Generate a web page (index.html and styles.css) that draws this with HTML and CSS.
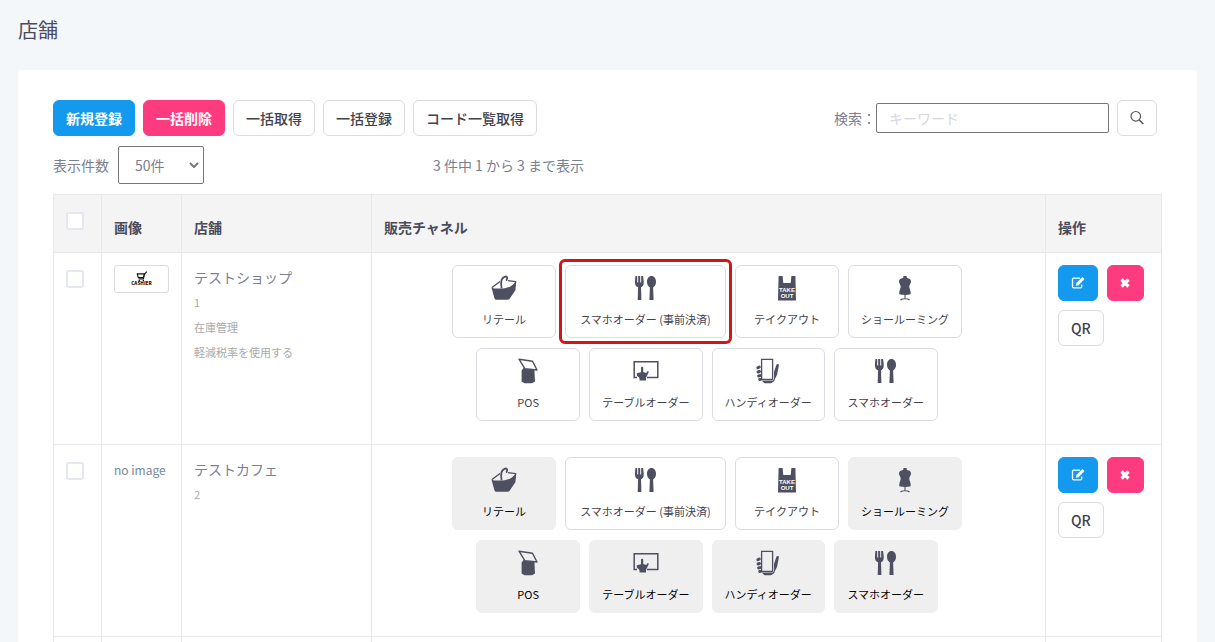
FILE: index.html
```html
<!DOCTYPE html>
<html lang="ja">
<head>
<meta charset="utf-8">
<meta name="viewport" content="width=device-width, initial-scale=1">
<title>店舗</title>
<link rel="stylesheet" href="styles.css">
</head>
<body>
<svg class="sprite" aria-hidden="true">
  <symbol id="i-basket" viewBox="0 0 26 26">
    <path d="M1 12.500 9 6.500M17 5.600 24.600 6.600 24 11 12 14.500" fill="none" stroke="currentColor" stroke-width="1.400" stroke-linejoin="round"/>
    <path d="M.4 12.200 3 13.400h8.500L14 14l4-1 7.200-6.600-.8 8.800-5.600 8.200q-.8 1.400-2.400 1.400H5.500Q4 24.800 3.400 23.200Z" fill="currentColor"/>
    <path d="M12 12.600 14.500 7 23.400 7.400 18.500 11.600Z" fill="var(--tile)"/>
    <path d="M10.500 12.500C9.500 7 10.500 3 13.500 1.800S16.600 3 15.600 5" fill="none" stroke="currentColor" stroke-width="1.800" stroke-linecap="round"/>
  </symbol>
  <symbol id="i-fork" viewBox="0 0 26 26">
    <path d="M2.400 1h1.800v6.500h1V1h2v6.500h1V1H10c.5 3 .8 5 .7 7-.1 2.500-1.300 3.800-2.700 4.300L8.400 25H4.700l.4-12.700C3.500 11.800 2.200 10.500 2 8c-.1-2 .2-4 .4-7Z" fill="currentColor"/>
    <path d="M18.500 1c2.800 0 4.500 2.600 4.500 5.700 0 2.700-1.200 4.900-2.900 5.700L20.600 25h-4.200l.5-12.600C15.200 11.600 14 9.400 14 6.700 14 3.600 15.700 1 18.500 1Z" fill="currentColor"/>
  </symbol>
  <symbol id="i-bag" viewBox="0 0 26 26">
    <path d="M4.600 1h4l.7 7h7.400l.7-7h4l.6 24.500H4Z" fill="currentColor"/>
    <text x="13" y="16.500" class="bag-text">TAKE</text>
    <text x="13" y="22.500" class="bag-text">OUT</text>
  </symbol>
  <symbol id="i-body" viewBox="0 0 26 26">
    <path d="M11.500 1h3l.4 2c2.400.5 4.100 1.200 4.100 3.400 0 2.200-1.700 3-1.700 5.100 0 2.200 1.600 3.400 1.400 7.700q-5.700 1.600-11.400 0c-.2-4.300 1.400-5.500 1.400-7.700C8.700 9.400 7 8.600 7 6.400 7 4.200 8.700 3.500 11.100 3Z" fill="currentColor"/>
    <path d="M13 19v5M8.500 25c1-1 2.700-1.300 4.500-1.300s3.500.3 4.500 1.300" fill="none" stroke="currentColor" stroke-width="1.100"/>
  </symbol>
  <symbol id="i-pos" viewBox="0 0 26 26">
    <path d="M6.600 12.500 9 9.500l2 1.500 8.400 1 .6 11.500-3 1.700H9.500L6.600 23.500Z" fill="currentColor"/>
    <path d="M4 1.200 17.500 3.200 22 12 10 10.800Z" fill="var(--tile)" stroke="currentColor" stroke-width="1.400" stroke-linejoin="round"/>
  </symbol>
  <symbol id="i-table" viewBox="0 0 26 26">
    <path d="M4 19.600H1.200V3.800h23.600v15.800H14" fill="none" stroke="currentColor" stroke-width="1.500"/>
    <path d="M8 10c0-1.600 2.200-1.600 2.200 0v4l3 .9 1.500-2 1.200.8-2.900 6.300v2.500H6.500v-2.500L3.800 17.500v-2.300l4.200-1Z" fill="currentColor"/>
  </symbol>
  <symbol id="i-handy" viewBox="0 0 26 26">
    <path d="M6.600 1.300h11v20h-11Z" fill="none" stroke="currentColor" stroke-width="1.300"/>
    <path d="M2.800 9.800 4.300 9M3 14l1.500-.5M3.500 18l1.500-.4M4.700 21.500l1-.2" stroke="currentColor" stroke-width="2.900" stroke-linecap="round"/>
    <path d="M19 14 21.500 6.500q1.600-1.200 2.500.3L22 17l-3 5.500Z" fill="currentColor"/>
    <path d="M6.500 22.500h11.500l1.400-2v2.500l-3.400 2.300H9.500Z" fill="currentColor"/>
  </symbol>
  <symbol id="i-search" viewBox="0 0 16 16">
    <circle cx="6.800" cy="6.300" r="4.800" fill="none" stroke="currentColor" stroke-width="1.200"/>
    <path d="m10.300 10 4 4" stroke="currentColor" stroke-width="1.500"/>
  </symbol>
  <symbol id="i-edit" viewBox="0 0 14 14">
    <path d="M9 2.200H2.600q-1.100 0-1.100 1.100v7.400q0 1.100 1.100 1.100h7q1.100 0 1.100-1.100V8.500" fill="none" stroke="currentColor" stroke-width="1.300"/>
    <path d="M11.300 1 13.500 3.100 7.500 9.200 4.800 9.700 5.300 7Z" fill="currentColor"/>
  </symbol>
  <symbol id="i-times" viewBox="0 0 14 14">
    <path d="M3.500 3.500l7 7M10.500 3.500l-7 7" stroke="currentColor" stroke-width="3.200"/>
  </symbol>
</svg>

<main class="page">
  <h1 class="page-title">店舗</h1>
  <section class="card">
    <div class="toolbar">
      <div class="actions">
        <button class="btn btn-primary" type="button">新規登録</button>
        <button class="btn btn-danger" type="button">一括削除</button>
        <button class="btn" type="button">一括取得</button>
        <button class="btn" type="button">一括登録</button>
        <button class="btn" type="button">コード一覧取得</button>
      </div>
      <form class="search">
        <label for="keyword">検索：</label>
        <input class="search-input" id="keyword" type="text" placeholder="キーワード">
        <button class="btn btn-search" type="button" aria-label="検索"><svg class="glyph"><use href="#i-search"/></svg></button>
      </form>
    </div>
    <div class="listing">
      <div class="per-page">
        <label for="count">表示件数</label>
        <span class="select-box">
          <select class="select" id="count"><option>50件</option></select>
          <svg class="caret" viewBox="0 0 10 6" aria-hidden="true"><path d="m1 1 4 4 4-4" fill="none" stroke="currentColor" stroke-width="2"/></svg>
        </span>
      </div>
      <p class="summary">3 件中 1 から 3 まで表示</p>
    </div>

    <table class="stores">
      <colgroup><col class="col-check"><col class="col-image"><col class="col-name"><col><col class="col-ops"></colgroup>
      <thead>
        <tr>
          <th class="top"><input class="check" type="checkbox" aria-label="すべて選択"></th>
          <th>画像</th><th>店舗</th><th>販売チャネル</th><th>操作</th>
        </tr>
      </thead>
      <tbody>
        <tr>
          <td><input class="check" type="checkbox" aria-label="テストショップ"></td>
          <td>
            <svg class="thumb" viewBox="0 0 55 28" role="img" aria-label="CASHIER">
              <path d="M23 8.500h7.500l-1 4h-5.500ZM33 6l-2 2.500-1.500 5.500h-5" fill="none" stroke="#111" stroke-width="1.200"/>
              <circle cx="25" cy="15.500" r=".8"/><circle cx="29.500" cy="15.500" r=".8"/>
              <text x="27.500" y="20.500" class="thumb-text">CASHIER</text>
            </svg>
          </td>
          <td>
            <p class="name">テストショップ</p>
            <p class="meta">1</p>
            <p class="meta">在庫管理</p>
            <p class="meta">軽減税率を使用する</p>
          </td>
          <td>
            <div class="channels">
              <div class="channel-row">
                <button class="channel" type="button"><svg class="icon"><use href="#i-basket"/></svg>リテール</button>
                <button class="channel channel-wide marked" type="button"><svg class="icon"><use href="#i-fork"/></svg>スマホオーダー (事前決済)</button>
                <button class="channel" type="button"><svg class="icon"><use href="#i-bag"/></svg>テイクアウト</button>
                <button class="channel" type="button"><svg class="icon"><use href="#i-body"/></svg>ショールーミング</button>
              </div>
              <div class="channel-row">
                <button class="channel" type="button"><svg class="icon"><use href="#i-pos"/></svg>POS</button>
                <button class="channel" type="button"><svg class="icon"><use href="#i-table"/></svg>テーブルオーダー</button>
                <button class="channel" type="button"><svg class="icon"><use href="#i-handy"/></svg>ハンディオーダー</button>
                <button class="channel" type="button"><svg class="icon"><use href="#i-fork"/></svg>スマホオーダー</button>
              </div>
            </div>
          </td>
          <td>
            <div class="ops">
              <button class="btn btn-primary" type="button" aria-label="編集"><svg class="glyph-small"><use href="#i-edit"/></svg></button>
              <button class="btn btn-danger btn-delete" type="button" aria-label="削除"><svg class="glyph-small"><use href="#i-times"/></svg></button>
              <button class="btn btn-qr" type="button">QR</button>
            </div>
          </td>
        </tr>
        <tr>
          <td><input class="check" type="checkbox" aria-label="テストカフェ"></td>
          <td><span class="no-image">no image</span></td>
          <td>
            <p class="name">テストカフェ</p>
            <p class="meta">2</p>
          </td>
          <td>
            <div class="channels">
              <div class="channel-row">
                <button class="channel off" type="button"><svg class="icon"><use href="#i-basket"/></svg>リテール</button>
                <button class="channel channel-wide" type="button"><svg class="icon"><use href="#i-fork"/></svg>スマホオーダー (事前決済)</button>
                <button class="channel" type="button"><svg class="icon"><use href="#i-bag"/></svg>テイクアウト</button>
                <button class="channel off" type="button"><svg class="icon"><use href="#i-body"/></svg>ショールーミング</button>
              </div>
              <div class="channel-row">
                <button class="channel off" type="button"><svg class="icon"><use href="#i-pos"/></svg>POS</button>
                <button class="channel off" type="button"><svg class="icon"><use href="#i-table"/></svg>テーブルオーダー</button>
                <button class="channel off" type="button"><svg class="icon"><use href="#i-handy"/></svg>ハンディオーダー</button>
                <button class="channel off" type="button"><svg class="icon"><use href="#i-fork"/></svg>スマホオーダー</button>
              </div>
            </div>
          </td>
          <td>
            <div class="ops">
              <button class="btn btn-primary" type="button" aria-label="編集"><svg class="glyph-small"><use href="#i-edit"/></svg></button>
              <button class="btn btn-danger btn-delete" type="button" aria-label="削除"><svg class="glyph-small"><use href="#i-times"/></svg></button>
              <button class="btn btn-qr" type="button">QR</button>
            </div>
          </td>
        </tr>
        <tr><td></td><td></td><td></td><td></td><td></td></tr>
      </tbody>
    </table>
  </section>
</main>
</body>
</html>
```

FILE: styles.css
```css
* { box-sizing: border-box; }

body {
  margin: 0;
  background: #f4f7fa;
  color: #7a7f92;
  font: 14px/25px "Noto Sans CJK JP", "Noto Sans", sans-serif;
}

button, input, select { font: inherit; color: inherit; margin: 0; }
p { margin: 0; }

.sprite { display: none; }

.page {
  display: flex;
  flex-direction: column;
  gap: 24px;
  height: 100vh;
  overflow: hidden;
  padding: 14px 18px 0;
}

.page-title {
  margin: 0;
  color: #4b4b5a;
  font-size: 20px;
  line-height: 32px;
  font-weight: 400;
}

.card {
  flex: 1 0 auto;
  padding: 30px 35px;
  border-radius: 4px;
  background: #fff;
}

.toolbar { display: flex; justify-content: space-between; }
.actions { display: flex; gap: 8px; }

.btn {
  height: 36px;
  padding: 0 12px;
  border: 1px solid #dadce2;
  border-radius: 6px;
  background: #fff;
  color: #42424e;
  line-height: 32px;
  font-weight: 500;
}
.btn-primary { border-color: #1399ee; background: #1399ee; color: #fff; font-weight: 700; }
.btn-danger { border-color: #ff3b7f; background: #ff3b7f; color: #fff; font-weight: 700; }

.search { display: flex; align-items: center; padding-right: 5px; }
.search-input {
  width: 233px;
  height: 30px;
  padding: 0 12px;
  border: 1px solid #777;
  border-radius: 2px;
  background: #fff;
}
.search-input::placeholder { color: #d5d7dc; opacity: 1; }
.btn-search { width: 40px; margin-left: 8px; padding: 0 11px; color: #555; }

.glyph { display: block; width: 16px; height: 16px; }
.glyph-small { display: block; width: 14px; height: 14px; }

.listing { display: flex; align-items: center; margin: 10px 0; }
.per-page { display: flex; align-items: center; gap: 9px; width: 380px; }
.select-box { position: relative; display: block; }
.select {
  width: 86px;
  height: 38px;
  padding: 0 16px;
  border: 1px solid #777;
  border-radius: 2px;
  background: #fff;
  appearance: none;
}
.caret {
  position: absolute;
  top: 16px;
  right: 5px;
  width: 10px;
  height: 6px;
  color: #777;
  pointer-events: none;
}

.stores {
  width: 100%;
  table-layout: fixed;
  border-collapse: collapse;
}
.col-check { width: 48px; }
.col-image { width: 80px; }
.col-name { width: 190px; }
.col-ops { width: 116px; }

.stores th, .stores td {
  padding: 12px;
  border: 1px solid #e8e8ec;
  text-align: left;
  vertical-align: top;
}
.stores th {
  height: 58px;
  background: #f4f4f4;
  color: #4b4b5a;
  font-weight: 700;
  vertical-align: bottom;
}
.stores th.top { vertical-align: middle; }

.check {
  appearance: none;
  display: block;
  width: 18px;
  height: 18px;
  border: 2px solid #e4e7f0;
  border-radius: 3px;
  background: #fff;
}
td .check { margin-top: 5px; }
th .check { margin-bottom: 5px; }

.thumb {
  display: block;
  width: 55px;
  height: 28px;
  border: 1px solid #dadce2;
  border-radius: 3px;
}
.thumb-text { font: 900 5px "Noto Sans CJK JP", sans-serif; fill: #111; text-anchor: middle; }
.no-image { font-size: 12px; color: #7b8797; white-space: nowrap; }
.meta { font-size: 11px; color: #aaa; }

.channels {
  display: grid;
  gap: 10px;
  padding: 0 3px 11px 0;
}
.channel-row { display: flex; justify-content: center; gap: 9px; }

.channel {
  --tile: #fff;
  position: relative;
  display: flex;
  flex-direction: column;
  align-items: center;
  gap: 8px;
  min-width: 104px;
  height: 73px;
  padding: 9px 12px;
  border: 1px solid #dadce2;
  border-radius: 6px;
  background: var(--tile);
  color: #42424e;
  font-size: 11px;
  line-height: 20px;
  white-space: nowrap;
}
.channel-wide { min-width: 161px; }
.channel.off { --tile: #efefef; border-color: #efefef; color: #000; }
.channel.marked::after {
  content: "";
  position: absolute;
  inset: -7px;
  z-index: 1;
  border: 3px solid #d41518;
  border-radius: 6px;
}
.icon { display: block; flex: none; width: 26px; height: 26px; color: #4f4f62; }
.bag-text { font: 900 6px "Liberation Sans", sans-serif; fill: var(--tile); text-anchor: middle; }

.ops { display: flex; flex-wrap: wrap; gap: 9px; }
.btn-delete { width: 37px; padding: 0 10px; }
```
